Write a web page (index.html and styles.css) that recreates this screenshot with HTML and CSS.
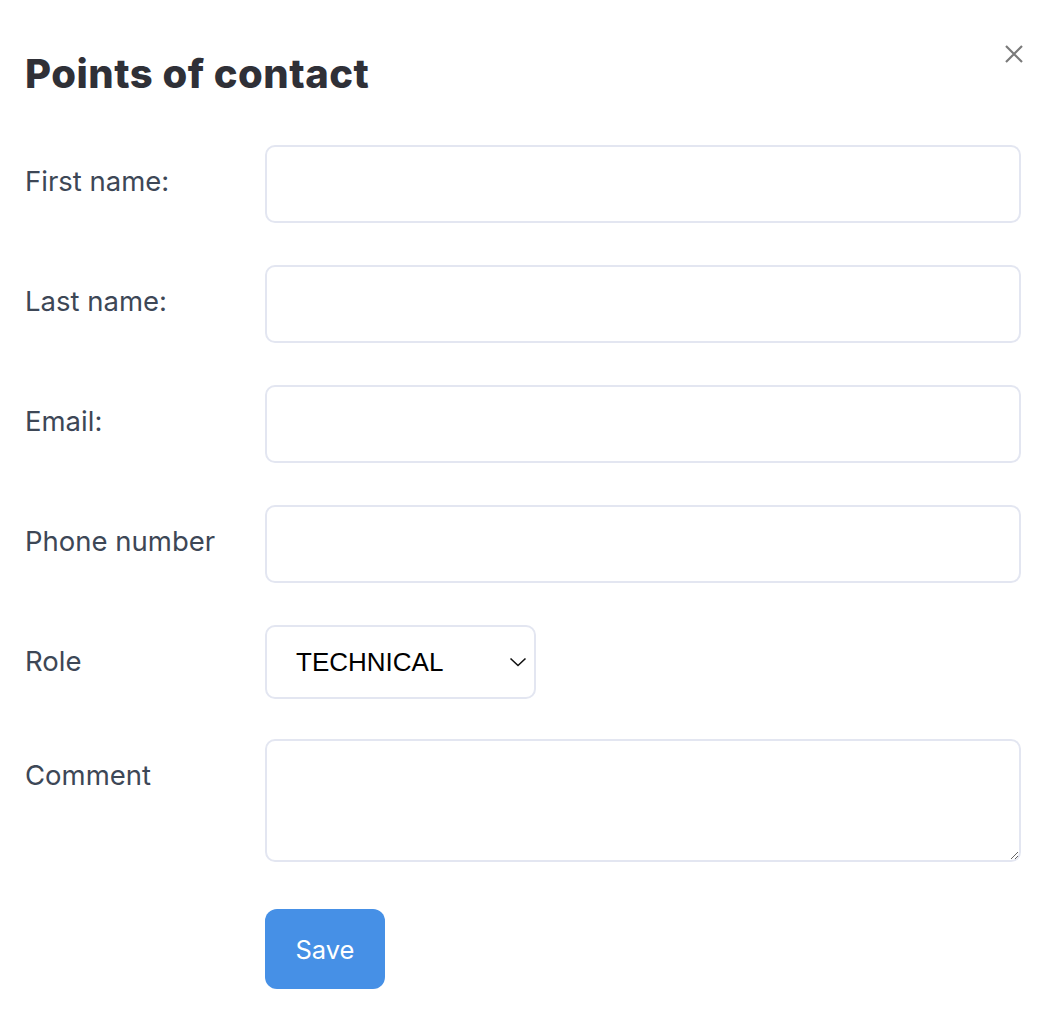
FILE: index.html
```html
<!DOCTYPE html>
<html>
<head>
<meta charset="utf-8">
<link rel="stylesheet" href="styles.css">
</head>
<body>
<div class="modal">
  <button class="close" aria-label="Close">
    <svg width="20" height="20" viewBox="0 0 20 20"><path d="M2 2 L18 18 M18 2 L2 18" stroke="#7a7a7a" stroke-width="2.2" fill="none"/></svg>
  </button>
  <h1 class="title">Points of contact</h1>
  <form class="form">
    <div class="row">
      <label class="label">First name:</label>
      <input class="field" type="text">
    </div>
    <div class="row">
      <label class="label">Last name:</label>
      <input class="field" type="text">
    </div>
    <div class="row">
      <label class="label">Email:</label>
      <input class="field" type="text">
    </div>
    <div class="row">
      <label class="label">Phone number</label>
      <input class="field" type="text">
    </div>
    <div class="row row-role">
      <label class="label label-role">Role</label>
      <div class="select">
        <span class="select-value">TECHNICAL</span>
        <svg class="chev" width="18" height="10" viewBox="0 0 18 10"><path d="M1.5 1.5 L9 8.5 L16.5 1.5" stroke="#111" stroke-width="1.6" fill="none"/></svg>
      </div>
    </div>
    <div class="row row-comment">
      <label class="label label-comment">Comment</label>
      <textarea class="field area"></textarea>
    </div>
    <div class="row row-save">
      <span class="label"></span>
      <button class="save" type="button">Save</button>
    </div>
  </form>
</div>
</body>
</html>
```
FILE: styles.css
```css
* { box-sizing: border-box; }
html, body { margin: 0; padding: 0; background: #fff; }
body { font-family: Inter, "Noto Sans", sans-serif; }
.modal {
  position: relative;
  padding: 46px 41px 0 25px;
  width: 1062px;
}
.close {
  position: absolute;
  top: 44px;
  right: 38px;
  background: none;
  border: 0;
  padding: 0;
  width: 20px;
  height: 20px;
}
.close svg { display: block; }
.title {
  margin: 0;
  font-family: Inter, sans-serif;
  font-weight: 800;
  font-size: 40px;
  line-height: 56px;
  color: #2f3037;
  letter-spacing: 0.5px;
}
.form {
  margin-top: 43px;
  display: flex;
  flex-direction: column;
  gap: 42px;
}
.row {
  display: flex;
  align-items: flex-start;
}
.label {
  width: 240px;
  flex: none;
  font-size: 27.5px;
  line-height: 73px;
  color: #3d4756;
}
.field {
  flex: 1;
  height: 78px;
  border: 2px solid #e3e6f1;
  border-radius: 10px;
  font: inherit;
  background: #fff;
  outline: none;
}
.label-role { line-height: 72px; }
.select {
  width: 271px;
  height: 74px;
  border: 2px solid #e3e6f1;
  border-radius: 10px;
  display: flex;
  align-items: center;
  justify-content: space-between;
  padding: 0 7px 0 29px;
}
.select-value {
  font-family: "Liberation Sans", Arial, sans-serif;
  font-size: 26px;
  color: #000;
}
.chev { display: block; }
.row-comment { margin-top: -2px; }
.label-comment { line-height: 72px; }
.area {
  height: 123px;
  resize: vertical;
}
.row-save { margin-top: 5px; }
.save {
  width: 120px;
  height: 80px;
  border: 0;
  border-radius: 12px;
  background: #4690e6;
  color: #fff;
  font-family: Inter, sans-serif;
  font-size: 25.5px;
  padding: 0;
}
```
